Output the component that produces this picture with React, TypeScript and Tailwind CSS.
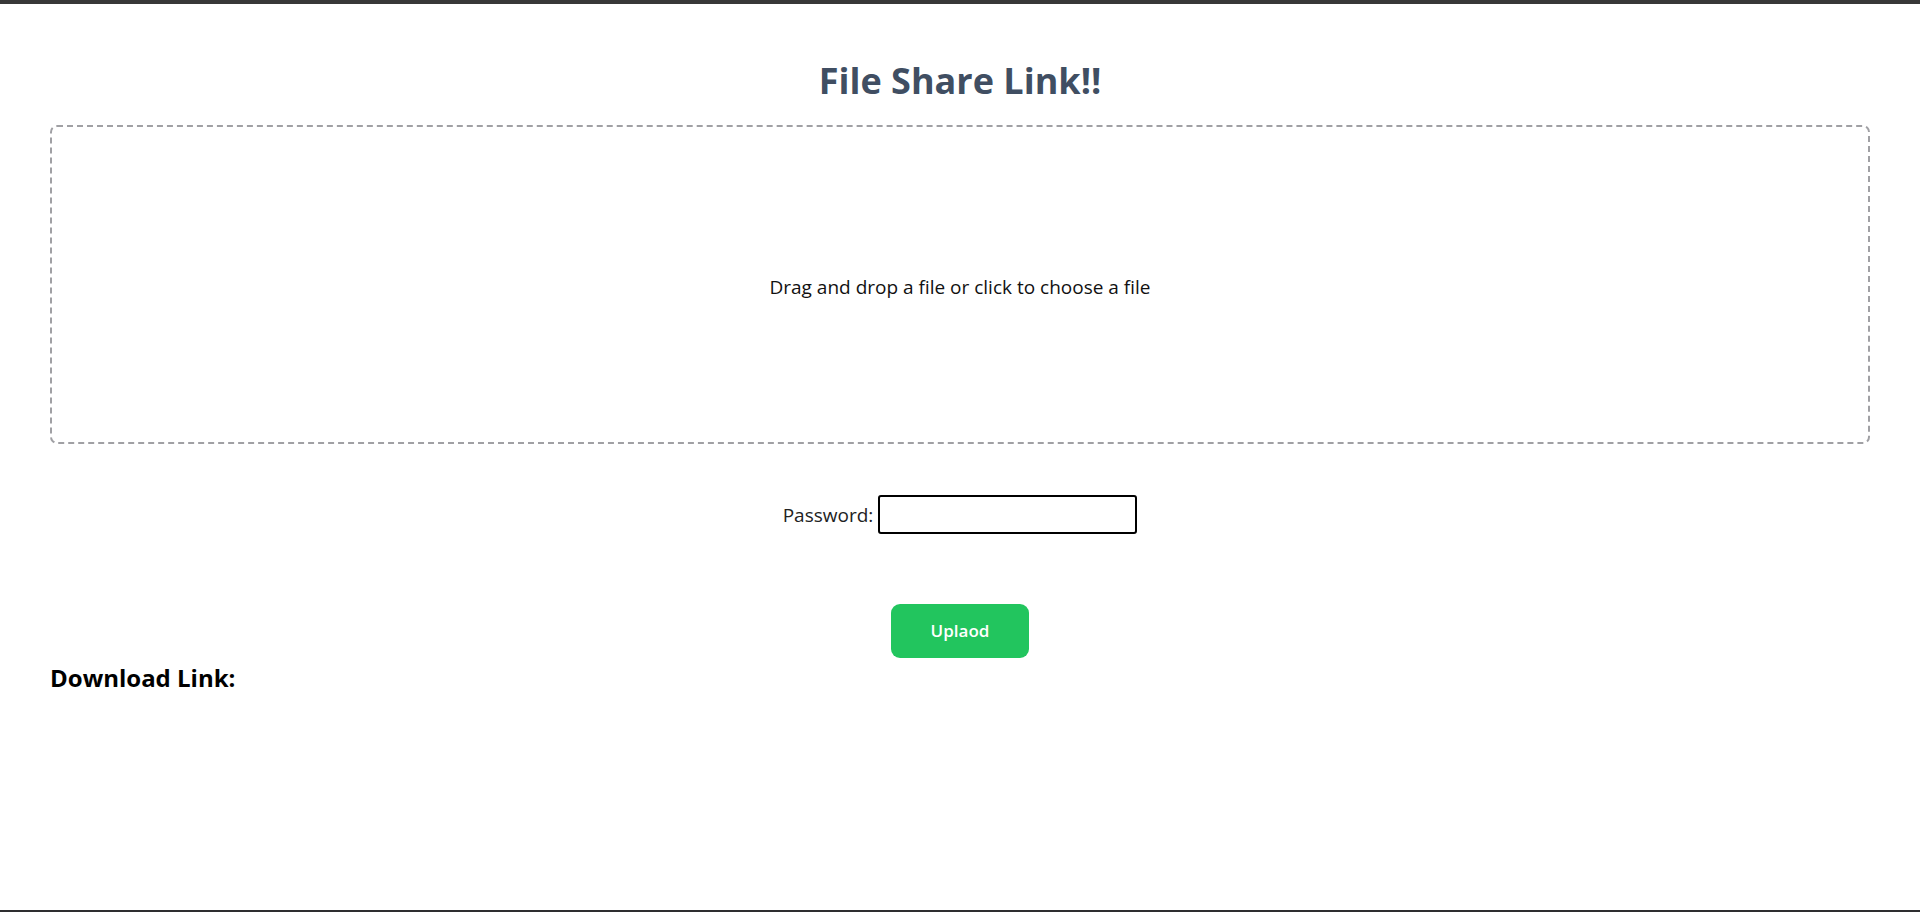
import { useState } from "react";

const App = () => {
    const [password, setPassword] = useState("");

    return (
        <div className="h-[912px] flex flex-col bg-white font-['Open_Sans',sans-serif] overflow-hidden">
            <div className="h-[4px] bg-[#383838]" />
            <main className="flex-1 px-[50px]">
                <h1 className="mt-[54px] text-center text-[36px] leading-[46px] font-bold text-[#404e62]">File Share Link!!</h1>
                <div className="mt-[21px] h-[319px] border-2 border-dashed border-[#a0a0a4] rounded-[7px] flex items-center justify-center cursor-pointer">
                    <p className="pt-[5px] text-[19px] text-[#111]">Drag and drop a file or click to choose a file</p>
                </div>
                <div className="mt-[51px] flex items-center justify-center gap-[5px]">
                    <label className="pt-[2px] text-[19px] text-[#222]">Password:</label>
                    <input
                        type="password"
                        value={password}
                        onChange={(e) => setPassword(e.target.value)}
                        className="w-[259px] h-[39px] border-2 border-black rounded-[3px] px-2 outline-none"
                    />
                </div>
                <div className="mt-[70px] flex justify-center">
                    <button className="w-[138px] h-[54px] bg-[#22c55e] text-white text-[17px] font-semibold rounded-[9px]">Uplaod</button>
                </div>
                <h3 className="mt-[4px] text-[24px] leading-[32px] font-bold text-black">Download Link:</h3>
            </main>
            <div className="h-[2px] bg-[#2e2e30]" />
        </div>
    )
}

export default App;
